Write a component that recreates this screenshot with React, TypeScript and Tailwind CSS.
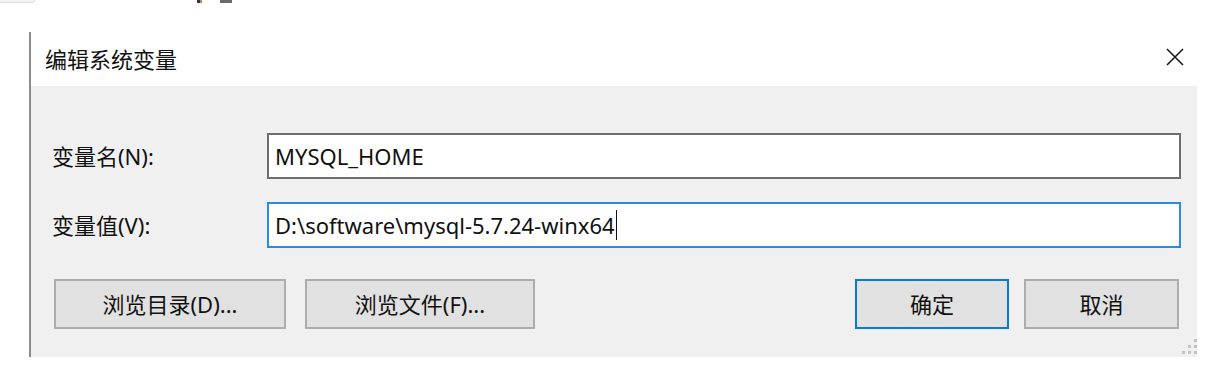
import React from "react";

const FONT = "font-['Noto_Sans','Noto_Sans_CJK_SC',sans-serif]";

function Field({ value, focused }: { value: string; focused?: boolean }) {
  return (
    <div
      className={`flex-1 h-[46px] bg-white border-2 flex items-center pl-[6px] text-[22px] text-[#111] ${
        focused ? "border-[#2a8be2]" : "border-[#6e6e6e]"
      }`}
    >
      <span className="whitespace-pre leading-none">{value}</span>
      {focused && <span className="ml-[1px] w-[1.5px] h-[30px] bg-[#111]" />}
    </div>
  );
}

function Btn({ label, w, primary }: { label: string; w: string; primary?: boolean }) {
  return (
    <div
      className={`${w} h-[50px] flex items-center justify-center bg-[#e1e1e1] border-2 text-[22px] text-[#111] ${
        primary ? "border-[#0a78d8]" : "border-[#adadad]"
      }`}
    >
      {label}
    </div>
  );
}

export default function App() {
  return (
    <div className={`w-[1221px] h-[378px] bg-white overflow-hidden ${FONT}`}>
      {/* cropped remnants at the very top */}
      <div className="h-[3px] flex">
        <div className="w-[35px] h-[3px] bg-[#f5f5f5] border-b border-r border-[#dcdcdc] rounded-br-[3px]" />
        <div className="ml-[162px] w-[3px] h-[3px] bg-[#2b3550]" />
        <div className="w-[2px] h-[3px] bg-[#c08a4a]" />
        <div className="ml-[18px] w-[12px] h-[3px] bg-[#6a6a6a]" />
      </div>

      <div className="ml-[29px] mt-[29px] w-[1168px] h-[325px] flex flex-col border-l-2 border-[#8c8c8c]">
        {/* title bar */}
        <div className="h-[54px] bg-white flex items-center justify-between pl-[14px] pr-[13px]">
          <span className="text-[22px] text-[#111] leading-none">编辑系统变量</span>
          <svg width="18" height="18" viewBox="0 0 18 18" className="mt-[-4px]">
            <path d="M1 1 L17 17 M17 1 L1 17" stroke="#1a1a1a" strokeWidth="1.6" fill="none" />
          </svg>
        </div>

        {/* body */}
        <div className="relative flex-1 bg-[#f0f0f0] pl-[21px] pr-[16px] pt-[47px]">
          <div className="flex items-center">
            <div className="w-[215px] text-[22px] text-[#111] leading-none">变量名(N):</div>
            <Field value="MYSQL_HOME" />
          </div>
          <div className="flex items-center mt-[23px]">
            <div className="w-[215px] text-[22px] text-[#111] leading-none">变量值(V):</div>
            <Field value={"D:\\software\\mysql-5.7.24-winx64"} focused />
          </div>
          <div className="flex mt-[31px] ml-[2px] mr-[2px]">
            <Btn label="浏览目录(D)..." w="w-[232px]" />
            <div className="ml-[19px]">
              <Btn label="浏览文件(F)..." w="w-[230px]" />
            </div>
            <div className="ml-auto flex gap-[15px]">
              <Btn label="确定" w="w-[154px]" primary />
              <Btn label="取消" w="w-[155px]" />
            </div>
          </div>

          {/* size grip */}
          <svg
            width="15"
            height="15"
            viewBox="0 0 15 15"
            className="absolute right-0 bottom-[3px]"
          >
            <g fill="#c4c4c4">
              <rect x="12" y="0" width="3" height="3" />
              <rect x="6" y="6" width="3" height="3" />
              <rect x="12" y="6" width="3" height="3" />
              <rect x="0" y="12" width="3" height="3" />
              <rect x="6" y="12" width="3" height="3" />
              <rect x="12" y="12" width="3" height="3" />
            </g>
          </svg>
        </div>
      </div>
    </div>
  );
}
